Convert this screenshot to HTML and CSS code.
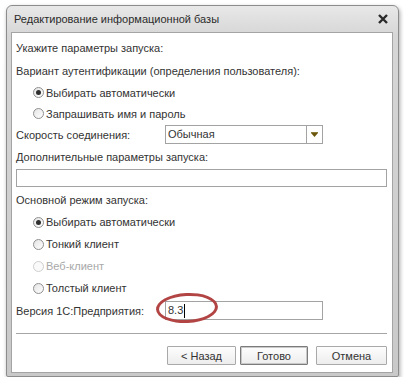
FILE: index.html
```html
<!DOCTYPE html>
<html lang="ru">
<head>
    <meta charset="utf-8">
    <title>Редактирование информационной базы</title>
    <link rel="stylesheet" href="styles.css">
</head>
<body>
    <div class="window">
        <div class="titlebar">
            <span class="title">Редактирование информационной базы</span>
            <svg class="close" width="10" height="10" viewBox="0 0 10 10">
                <path d="M1 1 L9 9 M9 1 L1 9" stroke="#2a2a2a" stroke-width="2.4" fill="none"/>
            </svg>
        </div>
        <div class="client">
            <div class="row first">Укажите параметры запуска:</div>
            <div class="row tall">Вариант аутентификации (определения пользователя):</div>
            <div class="radio-row short"><span class="radio checked"></span>Выбирать автоматически</div>
            <div class="radio-row short"><span class="radio"></span>Запрашивать имя и пароль</div>

            <div class="field-row speed">
                <span class="field-label">Скорость соединения:</span>
                <div class="combo">
                    <span class="combo-text">Обычная</span>
                    <span class="combo-btn">
                        <svg width="7" height="5" viewBox="0 0 7 5">
                            <rect x="0" y="0" width="7" height="1" fill="#8a7a3a"/>
                            <polygon points="0,1 7,1 3.5,5" fill="#6b560c"/>
                        </svg>
                    </span>
                </div>
            </div>

            <div class="row tall">Дополнительные параметры запуска:</div>
            <div class="text-input wide"></div>

            <div class="row section">Основной режим запуска:</div>
            <div class="radio-row"><span class="radio checked"></span>Выбирать автоматически</div>
            <div class="radio-row"><span class="radio"></span>Тонкий клиент</div>
            <div class="radio-row disabled"><span class="radio"></span>Веб-клиент</div>
            <div class="radio-row"><span class="radio"></span>Толстый клиент</div>

            <div class="field-row version">
                <span class="field-label">Версия 1С:Предприятия:</span>
                <div class="text-input short">8.3<span class="caret"></span></div>
                <span class="mark"></span>
            </div>

            <div class="separator"></div>

            <div class="buttons">
                <button class="btn back">&lt; Назад</button>
                <button class="btn default">Готово</button>
                <button class="btn cancel">Отмена</button>
            </div>
        </div>
    </div>
</body>
</html>
```

FILE: styles.css
```css
* {
    box-sizing: border-box;
    margin: 0;
    padding: 0;
}

body {
    background-color: #fff;
    font-family: 'Liberation Sans', Arial, sans-serif;
    font-size: 11px;
    color: #333;
}

.window {
    margin: 5px 0 0 6px;
    width: 393px;
    height: 372px;
    border: 1px solid #8c8c8c;
    border-radius: 6px 6px 2px 2px;
    background: linear-gradient(to bottom, #e8e8e8, #d6d6d6 30px, #c9c9c9);
    box-shadow: 1px 2px 4px rgba(0, 0, 0, 0.35);
    display: flex;
    flex-direction: column;
}

.titlebar {
    height: 26px;
    display: flex;
    align-items: center;
    justify-content: space-between;
    padding: 0 10px 0 7px;
}

.title {
    font-size: 11px;
    color: #2b2b2b;
}

.client {
    flex: 1;
    margin: 0 5px 3px 4px;
    background-color: #fff;
    border: 1px solid #a4a4a4;
    padding: 4px 5px 0 4px;
    display: flex;
    flex-direction: column;
}

.row {
    height: 22px;
    display: flex;
    align-items: center;
}

.row.tall {
    height: 23px;
}

.row.section {
    margin-top: 2px;
}

.radio-row {
    height: 22px;
    display: flex;
    align-items: center;
    padding-left: 17px;
}

.radio-row.short {
    height: 21px;
}

.radio-row.disabled {
    color: #a8a8a8;
}

.radio {
    width: 11px;
    height: 11px;
    border: 1px solid #8f8f8f;
    border-radius: 50%;
    background: linear-gradient(135deg, #e4e4e4, #fff);
    margin-right: 2px;
    display: flex;
    align-items: center;
    justify-content: center;
}

.radio.checked::after {
    content: '';
    width: 5px;
    height: 5px;
    border-radius: 50%;
    background-color: #2e2e2e;
}

.disabled .radio {
    border-color: #cfcfcf;
    background: #fafafa;
}

.field-row {
    display: flex;
    align-items: center;
    position: relative;
}

.field-row.speed {
    height: 21px;
}

.field-row.version {
    height: 23px;
}

.field-label {
    width: 149px;
}

.combo {
    width: 158px;
    height: 19px;
    border: 1px solid #a3a3a3;
    display: flex;
}

.combo-text {
    flex: 1;
    padding-left: 2px;
    line-height: 17px;
}

.combo-btn {
    width: 16px;
    border-left: 1px solid #a3a3a3;
    display: flex;
    align-items: center;
    justify-content: center;
}

.text-input {
    border: 1px solid #a3a3a3;
    background-color: #fff;
}

.text-input.wide {
    height: 18px;
    margin-top: 1px;
}

.text-input.short {
    width: 158px;
    height: 19px;
    padding-left: 2px;
    line-height: 17px;
    display: flex;
    align-items: center;
}

.caret {
    width: 1px;
    height: 14px;
    margin-left: 1px;
    background-color: #000;
}

.mark {
    position: absolute;
    left: 140px;
    top: -6px;
    width: 62px;
    height: 30px;
    border: 3px solid #b24444;
    border-radius: 50%;
    transform: rotate(-3deg);
}

.separator {
    margin-top: 11px;
    height: 2px;
    border-top: 1px solid #a6a6a6;
    border-bottom: 1px solid #fff;
}

.buttons {
    margin-top: 11px;
    display: flex;
    justify-content: flex-end;
}

.btn {
    height: 19px;
    font-family: 'Liberation Sans', Arial, sans-serif;
    font-size: 11px;
    color: #333;
    border: 1px solid #a9a9a9;
    border-radius: 1px;
    background: linear-gradient(to bottom, #fdfdfd, #ededed);
}

.btn.back {
    width: 69px;
}

.btn.default {
    width: 68px;
    margin-left: 4px;
    border-color: #7b7b7b;
    box-shadow: inset 0 0 0 1px #c8c8c8;
}

.btn.cancel {
    width: 71px;
    margin-left: 8px;
}
```
